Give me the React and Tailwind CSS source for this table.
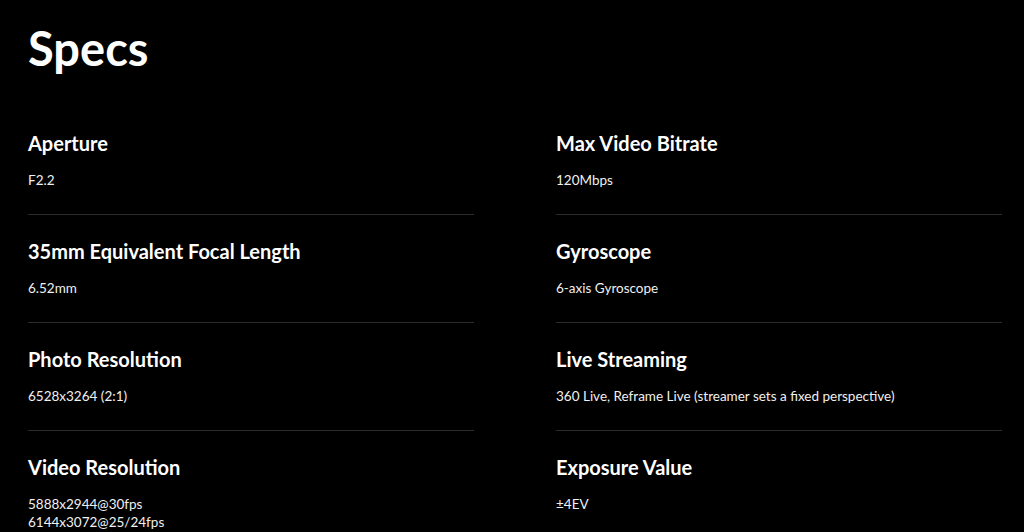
import React from "react";

const left = [
  { t: "Aperture", v: ["F2.2"] },
  { t: "35mm Equivalent Focal Length", v: ["6.52mm"] },
  { t: "Photo Resolution", v: ["6528x3264 (2:1)"] },
  { t: "Video Resolution", v: ["5888x2944@30fps", "6144x3072@25/24fps"] },
];
const right = [
  { t: "Max Video Bitrate", v: ["120Mbps"] },
  { t: "Gyroscope", v: ["6-axis Gyroscope"] },
  { t: "Live Streaming", v: ["360 Live, Reframe Live (streamer sets a fixed perspective)"] },
  { t: "Exposure Value", v: ["±4EV"] },
];

function Item({ t, v }) {
  return (
    <div className="pt-[24px] pb-[25px] border-b border-[#2c2c2c]">
      <div className="text-[20px] leading-[24px] font-bold text-white">{t}</div>
      <div className="mt-[16px] text-[13.5px] leading-[18px] text-[#f0f0f0]">
        {v.map((x, i) => (
          <div key={i}>{x}</div>
        ))}
      </div>
    </div>
  );
}

export default function App() {
  return (
    <div
      className="w-[1024px] h-[532px] overflow-hidden bg-black pl-[28px]"
      style={{ fontFamily: "Lato, 'Noto Sans', sans-serif" }}
    >
      <h1 className="pt-[20px] text-[47px] leading-[56px] font-bold text-white">Specs</h1>
      <div className="mt-[31px] grid grid-cols-[446px_446px] gap-x-[82px]">
        <div>
          {left.map((x) => (
            <Item key={x.t} {...x} />
          ))}
        </div>
        <div>
          {right.map((x) => (
            <Item key={x.t} {...x} />
          ))}
        </div>
      </div>
    </div>
  );
}
